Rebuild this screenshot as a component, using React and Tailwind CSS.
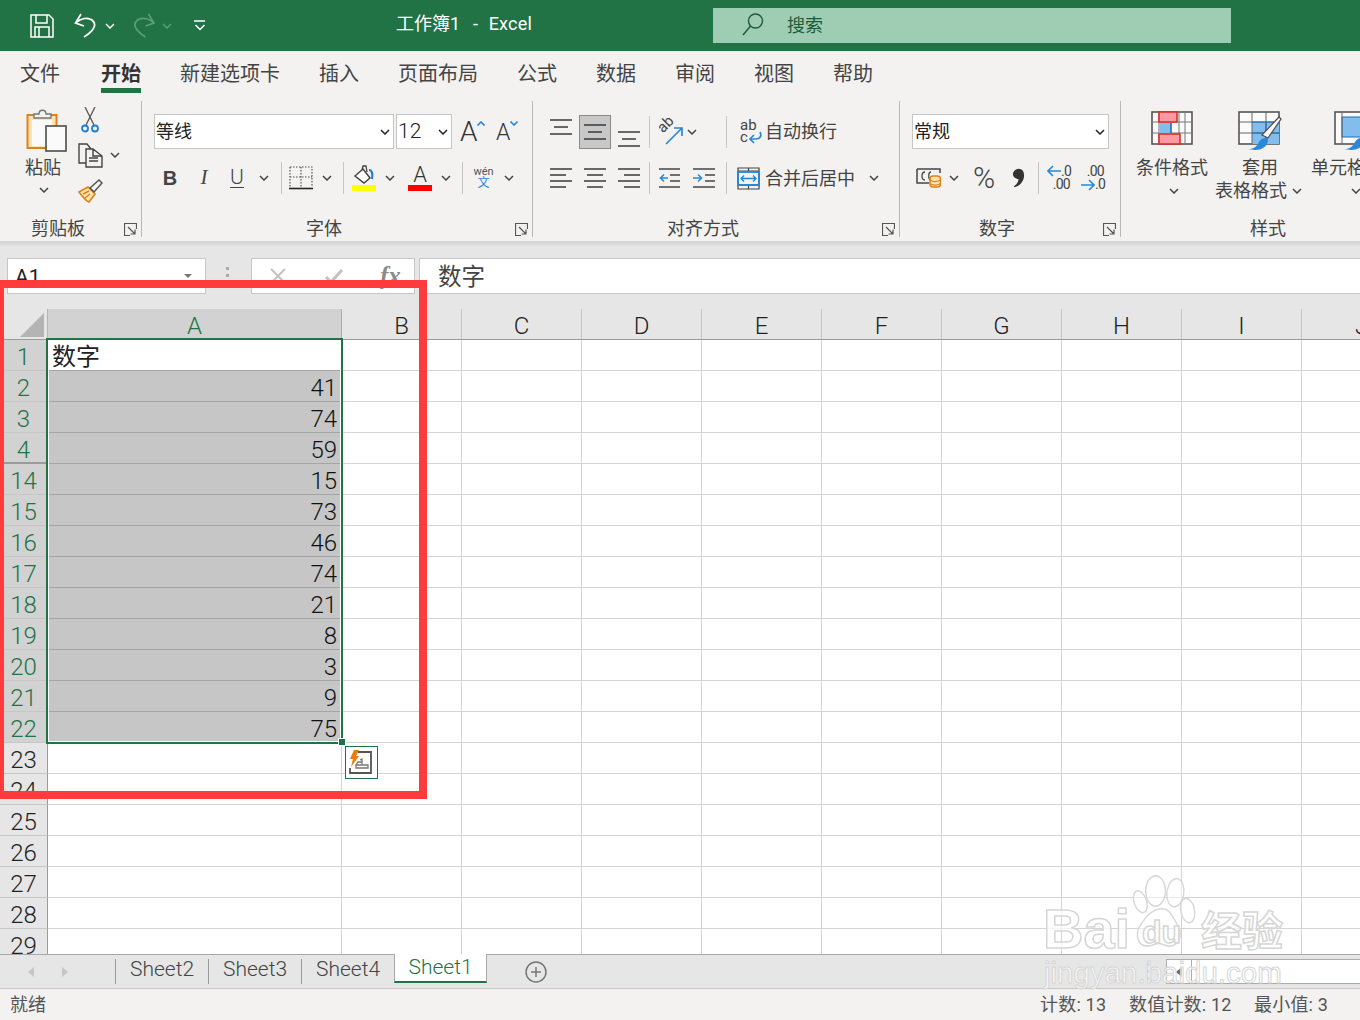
import React from "react";

const Chev = ({ className = "" }) => (
  <svg width="10" height="6" viewBox="0 0 10 6" className={`shrink-0 ${className}`} fill="none" stroke="#444" strokeWidth="1.5"><path d="M1 1l4 4 4-4" /></svg>
);
const Sep = ({ className = "" }) => <div className={`w-px h-[32px] bg-[#c8c6c4] shrink-0 ${className}`} />;
const Launcher = ({ className = "" }) => (
  <svg width="13" height="13" viewBox="0 0 13 13" className={`shrink-0 ${className}`} fill="none" stroke="#555" strokeWidth="1.2"><path d="M12.5 6V.5H.5v12H6M4 4l7 7M11 6.5V11H6.5" /></svg>
);
const Lines = ({ widths, offsets, className = "", gap = 7 }) => (
  <svg width="22" height={2 + (widths.length - 1) * gap} viewBox={`0 0 22 ${2 + (widths.length - 1) * gap}`} className={`shrink-0 ${className}`} stroke="#3a3a3a" strokeWidth="1.5">
    {widths.map((w, i) => <path key={i} d={`M${offsets[i]} ${1 + i * gap}h${w}`} />)}
  </svg>
);

function TitleBar() {
  return (
    <div className="h-[51px] bg-[#217346] flex items-center shrink-0 text-white">
      <svg width="24" height="24" viewBox="0 0 24 24" className="ml-[30px]" fill="none" stroke="#fff" strokeWidth="1.5"><path d="M1 1h18l4 4v18H1zM6 1v8h11V1M5 23V13h14v10M9 13v10" /></svg>
      <svg width="22" height="25" viewBox="0 0 22 25" className="ml-[20px]" fill="none" stroke="#fff" strokeWidth="1.7"><path d="M7 1L1.5 10 10 13M1.5 10C7 5 14 4 18 7c5 4 3 10-8 17" /></svg>
      <Chev className="ml-[9px] [&>path]:stroke-white" />
      <svg width="23" height="25" viewBox="0 0 22 25" className="ml-[18px]" fill="none" stroke="#5b9c7a" strokeWidth="1.7"><path d="M15 1l5.5 9L12 13M20.5 10C15 5 8 4 4 7c-5 4-3 10 8 17" /></svg>
      <Chev className="ml-[6px] [&>path]:stroke-[#5b9c7a]" />
      <svg width="12" height="11" viewBox="0 0 12 11" className="ml-[22px]" fill="none" stroke="#fff" strokeWidth="1.5"><path d="M0 1h11M1.5 5L6 9.5 10.500 5" /></svg>
      <div className="ml-[190px] w-[136px] flex text-[18px] leading-[24px] whitespace-nowrap -mt-[3px]">
        <span className="w-[64px]">工作簿1</span>
        <span className="ml-[13px] w-[6px]">-</span>
        <span className="ml-[10px] tracking-[0.2px]">Excel</span>
      </div>
      <div className="ml-[181px] w-[518px] h-[35px] bg-[#9fcdb3] flex items-center -mt-[1px]">
        <svg width="22" height="24" viewBox="0 0 22 24" className="ml-[29px]" fill="none" stroke="#1c5c39" strokeWidth="1.4"><circle cx="13.500" cy="8" r="7" /><path d="M8.500 13L1 22" /></svg>
        <span className="ml-[23px] text-[18px] text-[#1c5c39]">搜索</span>
      </div>
    </div>
  );
}

function Tabs() {
  const t = ["新建选项卡", "插入", "页面布局", "公式", "数据", "审阅", "视图", "帮助"];
  return (
    <div className="h-[49px] bg-[#f3f2f1] flex items-start pl-[20px] gap-[39px] text-[20px] leading-[46px] text-[#444] shrink-0">
      <span className="mr-[2px]">文件</span>
      <span className="font-bold text-[#333] border-b-[5px] border-[#217346] h-[42px] leading-[46px]">开始</span>
      {t.map((x) => <span key={x}>{x}</span>)}
    </div>
  );
}

const Group = ({ w, label, labelPl, launcher, children, noBorder }) => (
  <div className={`h-[136px] mt-px shrink-0 flex flex-col ${noBorder ? "" : "border-r border-[#b8b8b8]"}`} style={{ width: w }}>
    {children}
    <div className="mt-auto h-[16px] flex items-center text-[18px] leading-[16px] text-[#444]">
      <span style={{ marginLeft: labelPl }}>{label}</span>
      {launcher && <Launcher className="ml-auto mr-[4px] mt-[1px]" />}
    </div>
  </div>
);

function Clipboard() {
  return (
    <Group w={142} label="剪贴板" labelPl={31} launcher>
      <div className="flex pt-[6px]">
        <div className="ml-[24px] w-[44px] flex flex-col items-start text-[18px] text-[#444]">
          <svg width="44" height="46" viewBox="0 0 44 46">
            <rect x="3.500" y="8" width="29" height="33" fill="#fbe5ae" stroke="#e0801c" strokeWidth="2" />
            <rect x="8" y="13" width="20" height="26" fill="#fafafa" />
            <path d="M10 11V7h5c0-5 7-5 7 0h5v4z" fill="#f3f2f1" stroke="#777" strokeWidth="1.4" />
            <rect x="22" y="19" width="20" height="25" fill="#fafafa" stroke="#555" strokeWidth="1.7" />
          </svg>
          <span className="mt-[2px] ml-[1px] leading-[26px]">粘贴</span>
          <Chev className="mt-[6px] ml-[15px]" />
        </div>
        <div className="ml-[10px] flex flex-col">
          <svg width="18" height="26" viewBox="0 0 18 26" className="ml-[3px]" fill="none">
            <path d="M4 0l9 18M14 0L5 18" stroke="#555" strokeWidth="1.3" />
            <circle cx="4" cy="21.500" r="3" stroke="#1f7fd0" strokeWidth="1.8" />
            <circle cx="14" cy="21.500" r="3" stroke="#1f7fd0" strokeWidth="1.8" />
          </svg>
          <div className="flex items-center mt-[10px]">
            <svg width="25" height="25" viewBox="0 0 25 25" fill="none" stroke="#444" strokeWidth="1.4"><path d="M8 20H1V1h8l4 5M8 6h7l9 7v11H8zM15 6v7h9M11 15h9M11 18h9" /></svg>
            <Chev className="ml-[7px] mt-[-2px]" />
          </div>
          <svg width="25" height="24" viewBox="0 0 25 24" className="mt-[11px]" fill="none">
            <path d="M1 13l9-5 7 7-6 8c-3-1-7-6-10-10z" fill="#fbe5ae" stroke="#e0801c" strokeWidth="1.6" />
            <path d="M5 15l6-3M7 19l5-4" stroke="#e0801c" strokeWidth="1.4" />
            <path d="M12 9l9-8 3 3-8 9z" fill="#f3f2f1" stroke="#555" strokeWidth="1.5" />
          </svg>
        </div>
      </div>
    </Group>
  );
}

const SelectBox = ({ w, text, ml, textSize = "text-[18px]" }) => (
  <div className={`h-[35px] bg-white border border-[#c6c6c6] flex items-center shrink-0 pl-[1px] pr-[3px]`} style={{ width: w, marginLeft: ml }}>
    <span className={`${textSize} text-[#222] flex-1`}>{text}</span>
    <Chev className="[&>path]:stroke-[#222]" />
  </div>
);

function FontGroup() {
  return (
    <Group w={391} label="字体" labelPl={164} launcher>
      <div className="flex items-center pt-[13px] h-[48px]">
        <SelectBox w={240} ml={12} text="等线" />
        <SelectBox w={56} ml={2} text="12" textSize="text-[21px] font-light" />
        <div className="ml-[8px] w-[24px] flex items-start h-[28px]">
          <span className="text-[28px] leading-[28px] font-light text-[#333]">A</span>
          <svg width="8" height="5" viewBox="0 0 8 5" className="mt-[3px] -ml-[1px] shrink-0" fill="none" stroke="#2b88d8" strokeWidth="1.6"><path d="M.5 4.500L4 1l3.500 3.500" /></svg>
        </div>
        <div className="ml-[12px] w-[24px] flex items-start h-[24px]">
          <span className="text-[23px] leading-[26px] font-light text-[#333]">A</span>
          <svg width="8" height="5" viewBox="0 0 8 5" className="mt-[1px] shrink-0" fill="none" stroke="#2b88d8" strokeWidth="1.600"><path d="M.5.5L4 4 7.500.5" /></svg>
        </div>
      </div>
      <div className="flex items-center h-[30px] mt-[14px] text-[#444]">
        <span className="ml-[18px] w-[20px] text-center font-['Liberation_Sans'] font-bold text-[20px]">B</span>
        <span className="ml-[14px] w-[20px] text-center font-['Liberation_Serif'] italic text-[21px]">I</span>
        <span className="ml-[13px] w-[20px] text-center text-[21px] font-light underline underline-offset-3 decoration-1">U</span>
        <Chev className="ml-[12px]" />
        <Sep className="ml-[12px]" />
        <svg width="24" height="24" viewBox="0 0 24 24" className="ml-[7px] shrink-0" fill="none">
          <path d="M1 1h22v20M1 1v20M12 1v20M1 11h22" stroke="#555" strokeWidth="1.200" strokeDasharray="1.500 1.500" />
          <path d="M0 22.500h24" stroke="#222" strokeWidth="1.600" />
        </svg>
        <Chev className="ml-[9px]" />
        <Sep className="ml-[11px]" />
        <svg width="24" height="26" viewBox="0 0 24 26" className="ml-[8px] shrink-0" fill="none">
          <path d="M3 11l8-7 7 9-6 5z" fill="#fff" stroke="#444" strokeWidth="1.500" />
          <path d="M10 5l1-4h3l1 6" stroke="#444" strokeWidth="1.300" />
          <path d="M17 5c3 0 4 4 3 9" stroke="#1f7fd0" strokeWidth="2.200" />
          <rect y="20" width="24" height="6" fill="#ffff00" />
        </svg>
        <Chev className="ml-[9px]" />
        <div className="ml-[13px] w-[24px] h-[26px] flex flex-col items-center shrink-0">
          <span className="text-[22px] leading-[20px] font-light text-[#333]">A</span>
          <div className="w-[24px] h-[6px] bg-[#ff0000] mt-auto" />
        </div>
        <Chev className="ml-[9px]" />
        <Sep className="ml-[11px]" />
        <div className="ml-[10px] w-[21px] flex flex-col items-center shrink-0 leading-[12px]">
          <span className="text-[11px] text-[#555] leading-[11px]">wén</span>
          <span className="text-[12px] text-[#2b88d8] leading-[13px]">文</span>
        </div>
        <Chev className="ml-[10px]" />
      </div>
    </Group>
  );
}

function AlignGroup() {
  return (
    <Group w={367} label="对齐方式" labelPl={134} launcher>
      <div className="flex items-center pt-[13px] h-[48px]">
        <Lines widths={[22, 14, 22]} offsets={[0, 4, 0]} gap={7} className="ml-[17px] mb-[10px]" />
        <div className="ml-[7px] w-[32px] h-[34px] bg-[#c8c8c8] border border-[#8a8a8a] flex items-center justify-center shrink-0">
          <Lines widths={[22, 14, 22]} offsets={[0, 4, 0]} gap={7} />
        </div>
        <Lines widths={[22, 14, 22]} offsets={[0, 4, 0]} gap={7} className="ml-[7px] mt-[14px]" />
        <Sep className="ml-[9px]" />
        <div className="ml-[8px] w-[25px] h-[27px] relative shrink-0">
          <span className="absolute left-[-1px] top-[-4px] text-[15px] leading-[20px] text-[#444] rotate-[-45deg]">ab</span>
          <svg width="18" height="18" viewBox="0 0 18 18" className="absolute left-[7px] top-[9px]" fill="none" stroke="#2b88d8" strokeWidth="1.700"><path d="M1 17L17 1M9 1h8v8" /></svg>
        </div>
        <Chev className="ml-[4px]" />
        <Sep className="ml-[29px]" />
        <div className="ml-[13px] w-[22px] h-[26px] relative shrink-0 flex flex-col text-[15px] leading-[12px] text-[#444]">
          <span>ab</span>
          <span>c</span>
          <svg width="14" height="13" viewBox="0 0 14 13" className="absolute left-[8px] top-[12px]" fill="none" stroke="#2b88d8" strokeWidth="1.700"><path d="M12 1c2 4 0 7-4 7H2M6 4L2 8l4 4" /></svg>
        </div>
        <span className="ml-[3px] text-[18px] text-[#444]">自动换行</span>
      </div>
      <div className="flex items-center h-[30px] mt-[14px]">
        <Lines widths={[22, 16, 22, 16]} offsets={[0, 0, 0, 0]} gap={6} className="ml-[17px]" />
        <Lines widths={[22, 16, 22, 16]} offsets={[0, 3, 0, 3]} gap={6} className="ml-[12px]" />
        <Lines widths={[22, 16, 22, 16]} offsets={[0, 6, 0, 6]} gap={6} className="ml-[12px]" />
        <Sep className="ml-[9px]" />
        <svg width="21" height="20" viewBox="0 0 21 20" className="ml-[9px] shrink-0" fill="none">
          <path d="M0 1h21M11 7h10M11 13h10M0 19h21" stroke="#444" strokeWidth="1.500" />
          <path d="M9 10H1M5 6.500L1.500 10 5 13.500" stroke="#2b88d8" strokeWidth="1.600" />
        </svg>
        <svg width="22" height="20" viewBox="0 0 22 20" className="ml-[13px] shrink-0" fill="none">
          <path d="M0 1h22M12 7h10M12 13h10M0 19h22" stroke="#444" strokeWidth="1.500" />
          <path d="M0 10h8M5 6.500L8.500 10 5 13.500" stroke="#2b88d8" strokeWidth="1.600" />
        </svg>
        <Sep className="ml-[11px]" />
        <svg width="23" height="23" viewBox="0 0 23 23" className="ml-[10px] shrink-0" fill="none">
          <path d="M1 1h21v21H1zM1 4h21M1 18h21M11.500 18v4M11.500 1v3" stroke="#444" strokeWidth="1.200" />
          <rect x="1" y="5" width="21" height="13" stroke="#1f88d8" strokeWidth="1.800" />
          <path d="M4 11.500h15M7 8.500l-3 3 3 3M16 8.500l3 3-3 3" stroke="#1f88d8" strokeWidth="1.300" />
        </svg>
        <span className="ml-[5px] w-[90px] text-[18px] text-[#444] shrink-0">合并后居中</span>
        <Chev className="ml-[14px]" />
      </div>
    </Group>
  );
}

function NumberGroup() {
  return (
    <Group w={221} label="数字" labelPl={79} launcher>
      <div className="flex items-center pt-[13px] h-[48px]">
        <SelectBox w={197} ml={12} text="常规" />
      </div>
      <div className="flex items-center h-[30px] mt-[14px] text-[#444]">
        <svg width="25" height="20" viewBox="0 0 25 20" className="ml-[16px] shrink-0" fill="none">
          <path d="M1 1h23v4M1 1v14h12" stroke="#444" strokeWidth="1.500" />
          <path d="M9 4C5 4 5 12 9 12M15 4c-3 0-3 8 0 8" stroke="#444" strokeWidth="1.300" />
          <rect x="14" y="8" width="10.500" height="11" rx="3" fill="#fbe5ae" stroke="#e0801c" strokeWidth="1.500" />
          <path d="M14 12c3 2 7 2 10.500 0M14 15.500c3 2 7 2 10.500 0" stroke="#e0801c" strokeWidth="1.200" />
        </svg>
        <Chev className="ml-[8px]" />
        <span className="ml-[13px] w-[24px] text-[30px] leading-[30px] font-light flex justify-center">%</span>
        <svg width="13" height="20" viewBox="0 0 14 20" className="ml-[16px] shrink-0" fill="#333"><path d="M7 0c4 0 6 3 6 7 0 6-4 11-10 13l-1-1c3-2 5-5 5-8-3 0-6-2-6-5s3-6 6-6z" /></svg>
        <Sep className="ml-[13px]" />
        <div className="ml-[8px] w-[23px] h-[26px] flex flex-col shrink-0 text-[14px] leading-[13px] text-right tracking-tighter relative">
          <span className="pl-[14px]">.0</span><span>.00</span>
          <svg width="14" height="12" viewBox="0 0 14 12" className="absolute left-0 top-0" fill="none" stroke="#2b88d8" strokeWidth="1.600"><path d="M14 6H1M6 1L1 6l5 5" /></svg>
        </div>
        <div className="ml-[11px] w-[23px] h-[26px] flex flex-col shrink-0 text-[14px] leading-[13px] text-right tracking-tighter relative">
          <span>.00</span><span className="pl-[14px]">.0</span>
          <svg width="14" height="12" viewBox="0 0 14 12" className="absolute left-0 bottom-0" fill="none" stroke="#2b88d8" strokeWidth="1.600"><path d="M0 6h13M8 1l5 5-5 5" /></svg>
        </div>
      </div>
    </Group>
  );
}

function StylesGroup() {
  return (
    <Group w={239} label="样式" labelPl={129} noBorder>
      <div className="flex pt-[10px] text-[18px] leading-[23px] text-[#444] overflow-visible">
        <div className="ml-[15px] w-[72px] flex flex-col items-center shrink-0">
          <svg width="42" height="34" viewBox="0 0 42 34" className="shrink-0" fill="none">
            <rect x="1" y="1" width="40" height="32" fill="#fafafa" stroke="#555" strokeWidth="1.600" />
            <path d="M8 1v32M28 1v32M34 1v32M1 11h40M1 22h40" stroke="#777" />
            <rect x="8" y="1" width="18" height="10" fill="#fb9aa2" stroke="#d9302c" strokeWidth="1.600" />
            <rect x="8" y="23" width="21" height="10" fill="#fb9aa2" stroke="#d9302c" strokeWidth="1.600" />
            <rect x="8" y="12" width="12" height="10" fill="#83bdee" />
            <path d="M20 12v10" stroke="#1f6fb8" strokeWidth="1.600" />
          </svg>
          <span className="mt-[11px] leading-[24px]">条件格式</span>
          <Chev className="mt-[8px] ml-[4px]" />
        </div>
        <div className="ml-[7px] w-[90px] flex flex-col items-center shrink-0">
          <svg width="44" height="40" viewBox="0 0 44 40" className="shrink-0" fill="none">
            <rect x="1" y="1" width="40" height="32" fill="#fafafa" stroke="#555" strokeWidth="1.600" />
            <rect x="14" y="11" width="27" height="22" fill="#83bdee" />
            <path d="M14 1v32M28 1v32M1 11h40M1 22h40" stroke="#666" />
            <path d="M14 11h27M28 11v22M14 22h27" stroke="#1f6fb8" />
            <path d="M24 24L41 6l2 2-13 19z" fill="#fafafa" stroke="#555" strokeWidth="1.300" />
            <path d="M10 38c5 0 8-2 10-5 1-3 4-6 7-6l3 1c0 6-4 11-13 11z" fill="#2b88d8" />
          </svg>
          <span className="leading-[24px] mt-[5px]">套用</span>
          <div className="flex items-center whitespace-nowrap w-[90px] leading-[22px]">
            <span>表格格式</span>
            <Chev className="ml-[5px]" />
          </div>
        </div>
        <div className="ml-[6px] w-[90px] flex flex-col items-center shrink-0">
          <svg width="44" height="40" viewBox="0 0 44 40" className="shrink-0" fill="none">
            <rect x="1" y="1" width="40" height="32" fill="#fafafa" stroke="#555" strokeWidth="1.600" />
            <rect x="8" y="6" width="33" height="20" fill="#83bdee" stroke="#1f6fb8" />
            <path d="M8 1v32" stroke="#666" />
            <path d="M10 38c5 0 8-2 10-5 1-3 4-6 7-6l3 1c0 6-4 11-13 11z" fill="#2b88d8" />
          </svg>
          <span className="leading-[24px] mt-[5px] whitespace-nowrap">单元格样式</span>
          <Chev className="mt-[8px]" />
        </div>
      </div>
    </Group>
  );
}

function FormulaBar() {
  return (
    <div className="h-[68px] shrink-0 bg-[#e6e6e6] bg-[linear-gradient(#d2d2d2,#e6e6e6_6px)] flex items-start pt-[17px] overflow-hidden">
      <div className="ml-[7px] w-[199px] h-[36px] bg-white border border-[#c6c6c6] flex items-center pl-[7px] pr-[13px] shrink-0">
        <span className="text-[21px] text-[#222] flex-1 mt-[4px]">A1</span>
        <div className="w-0 h-0 border-x-[4px] border-x-transparent border-t-[4px] border-t-[#777]" />
      </div>
      <div className="ml-[20px] w-[3px] h-[17px] mt-[9px] border-l-[3px] border-dotted border-[#aaa] shrink-0" />
      <div className="ml-[22px] w-[164px] h-[36px] bg-white border border-[#c6c6c6] flex items-center shrink-0 text-[#bbb]">
        <svg width="16" height="16" viewBox="0 0 16 16" className="ml-[18px]" fill="none" stroke="#c2c2c2" strokeWidth="2"><path d="M1 1l14 14M15 1L1 15" /></svg>
        <svg width="20" height="16" viewBox="0 0 20 16" className="ml-[38px]" fill="none" stroke="#c2c2c2" strokeWidth="3"><path d="M2 9l5 5L18 2" /></svg>
        <span className="ml-[36px] font-['Liberation_Serif'] italic font-bold text-[25px] text-[#8a8a8a]">fx</span>
      </div>
      <div className="ml-[4px] flex-1 h-[36px] bg-white border border-[#c6c6c6] border-r-0 pl-[18px] text-[23.500px] leading-[36px] text-[#444]">数字</div>
    </div>
  );
}

const rows = [
  ["1", "数字"], ["2", "41"], ["3", "74"], ["4", "59"], ["14", "15"], ["15", "73"], ["16", "46"], ["17", "74"], ["18", "21"], ["19", "8"], ["20", "3"], ["21", "9"], ["22", "75"],
  ["23"], ["24"], ["25"], ["26"], ["27"], ["28"], ["29"],
];
const cols = ["B", "C", "D", "E", "F", "G", "H", "I", "J", "K"];

function Sheet() {
  return (
    <div className="h-[645px] shrink-0 overflow-hidden relative bg-white font-light text-[24px] text-[#222]">
      <div className="h-[31px] flex bg-[#e6e6e6] border-b border-[#9b9b9b]">
        <div className="w-[48px] shrink-0 border-r border-[#b5b5b5] flex items-end justify-end pr-[3px] pb-[2px]">
          <div className="w-[24px] h-[24px] bg-[#b4b4b4] [clip-path:polygon(100%_0,100%_100%,0_100%)]" />
        </div>
        <div className="w-[294px] shrink-0 bg-[#d2d2d2] border-r border-[#ababab] text-center text-[#217346] leading-[35px]">A</div>
        {cols.map((c) => (
          <div key={c} className="w-[120px] shrink-0 border-r border-[#c6c6c6] text-center leading-[35px]">{c}</div>
        ))}
      </div>
      {rows.map(([n, v], i) => {
        const sel = i < 13;
        return (
          <div key={n} className="h-[31px] flex">
            <div className={`w-[48px] shrink-0 text-center leading-[34px] border-r border-[#9b9b9b] border-b ${sel ? "bg-[#d2d2d2] text-[#217346]" : "bg-[#e6e6e6]"} ${n === "4" ? "border-b-2 border-b-[#9b9b9b]" : "border-b-[#c6c6c6]"}`}>{n}</div>
            <div className={`w-[294px] shrink-0 border-r border-b px-[4px] leading-[34px] ${i === 0 ? "bg-white border-[#a5a5a5] text-left font-normal" : sel ? "bg-[#c6c6c6] border-[#a5a5a5] text-right text-[#111]" : "border-[#d4d4d4]"}`}>{v}</div>
            {cols.map((c) => <div key={c} className="w-[120px] shrink-0 border-r border-b border-[#d4d4d4]" />)}
          </div>
        );
      })}
      <div className="absolute left-[46px] top-[29px] w-[297px] h-[406px] border-2 border-[#217346] pointer-events-none">
        <div className="w-full h-full border border-white border-t-0 [border-top-color:transparent]" />
      </div>
      <div className="absolute left-[338px] top-[429px] w-[6px] h-[6px] bg-[#217346] border border-white box-content" />
      <div className="absolute left-[345px] top-[437px] w-[33px] h-[33px] bg-white border border-[#217346] flex items-center justify-center">
        <svg width="27" height="27" viewBox="0 0 27 27" fill="none">
          <path d="M10 3h13v21H2v-5" stroke="#555" strokeWidth="1.800" />
          <path d="M8 16h12v3H8zM8 16l2-3h4M12 11l2-1v5" stroke="#777" strokeWidth="1.300" />
          <path d="M6 1h5L8 7h3l-8 11 2-8H2z" fill="#e87d0d" />
        </svg>
      </div>
    </div>
  );
}

function SheetTabs() {
  const Tab = ({ t }) => (
    <>
      <div className="w-px h-[25px] bg-[#9b9b9b] shrink-0" />
      <span className="w-[92px] text-center text-[#444] leading-[26px] mb-[6px]">{t}</span>
    </>
  );
  return (
    <div className="h-[35px] shrink-0 bg-[#e6e6e6] border-y border-[#a8a8a8] border-b-[#c6c6c6] flex items-center text-[21px] font-light">
      <div className="ml-[28px] w-0 h-0 border-y-[5px] border-y-transparent border-r-[6px] border-r-[#c6c6c6]" />
      <div className="ml-[28px] w-0 h-0 border-y-[5px] border-y-transparent border-l-[6px] border-l-[#c6c6c6]" />
      <div className="ml-[47px] flex items-center">
        <Tab t="Sheet2" /><Tab t="Sheet3" /><Tab t="Sheet4" />
      </div>
      <div className="w-[93px] h-[29px] bg-white border-b-2 border-[#217346] border-x border-x-[#a8a8a8] text-center text-[#217346] leading-[26px] self-start shrink-0 -mt-px">Sheet1</div>
      <svg width="22" height="22" viewBox="0 0 22 22" className="ml-[38px] shrink-0" fill="none" stroke="#777" strokeWidth="1.500"><circle cx="11" cy="11" r="10" /><path d="M11 6v10M6 11h10" /></svg>
      <div className="ml-auto flex items-center">
        <div className="w-[3px] h-[17px] border-l-[3px] border-dotted border-[#aaa] mr-[16px]" />
        <div className="w-[26px] h-[25px] bg-white border border-[#ababab] flex items-center justify-center">
          <div className="w-0 h-0 border-y-[5px] border-y-transparent border-r-[6px] border-r-[#666]" />
        </div>
        <div className="w-[168px] h-[25px] bg-white border-y border-[#ababab]" />
      </div>
    </div>
  );
}

function Status() {
  return (
    <div className="flex-1 bg-[#f3f2f1] flex items-center text-[18px] text-[#555] tracking-[0.2px]">
      <span className="ml-[10px] tracking-normal">就绪</span>
      <span className="ml-auto w-[67px] whitespace-nowrap">计数: 13</span>
      <span className="ml-[22px] w-[103px] whitespace-nowrap">数值计数: 12</span>
      <span className="ml-[22px] w-[74px] whitespace-nowrap mr-[32px]">最小值: 3</span>
    </div>
  );
}

function Watermark() {
  const stroke = "[-webkit-text-stroke:1.500px_#d6d6d6] text-white/70 font-['Liberation_Sans'] font-bold";
  return (
    <div className="absolute left-[1040px] top-[875px] w-[260px] h-[120px] pointer-events-none">
      <svg width="84" height="80" viewBox="0 0 110 90" className="absolute left-[85px] top-0" preserveAspectRatio="none" fill="rgba(255,255,255,.5)" stroke="#d8d8d8" strokeWidth="1.800">
        <ellipse cx="40" cy="18" rx="13" ry="17" />
        <ellipse cx="66" cy="20" rx="11" ry="16" transform="rotate(10 66 20)" />
        <ellipse cx="20" cy="30" rx="8" ry="13" transform="rotate(-25 20 30)" />
        <ellipse cx="82" cy="40" rx="9" ry="14" transform="rotate(-15 82 40)" />
        <path d="M48 38c12 0 16 12 22 20 6 10 0 22-12 22-6 0-10-3-14-3s-8 3-15 3c-12 0-16-12-10-22 6-8 15-20 29-20z" />
      </svg>
      <div className={`absolute left-[3px] top-[24px] text-[56px] leading-[60px] ${stroke}`}>Bai</div>
      <div className={`absolute left-[102px] top-[39px] text-[32px] leading-[36px] ${stroke}`}>du</div>
      <div className={`absolute left-[161px] top-[28px] text-[41px] leading-[50px] font-['Noto_Sans_CJK_SC'] ${stroke}`}>经验</div>
      <div className="absolute left-[4px] top-[80px] text-[29.500px] leading-[36px] whitespace-nowrap [-webkit-text-stroke:1px_#d6d6d6] text-white/70 font-['Liberation_Sans']">jingyan.baidu.com</div>
    </div>
  );
}

export default function App() {
  return (
    <div className="relative w-[1360px] h-[1020px] overflow-hidden flex flex-col bg-white font-[Roboto,'Noto_Sans_CJK_SC',sans-serif]">
      <TitleBar />
      <Tabs />
      <div className="h-[141px] bg-[#f3f2f1] flex items-start shrink-0 overflow-hidden">
        <Clipboard /><FontGroup /><AlignGroup /><NumberGroup /><StylesGroup />
      </div>
      <FormulaBar />
      <Sheet />
      <SheetTabs />
      <Status />
      <Watermark />
      <div className="absolute left-[-4px] top-[280px] w-[431px] h-[519px] border-[8px] border-[#ff3b3b] pointer-events-none" />
    </div>
  );
}
